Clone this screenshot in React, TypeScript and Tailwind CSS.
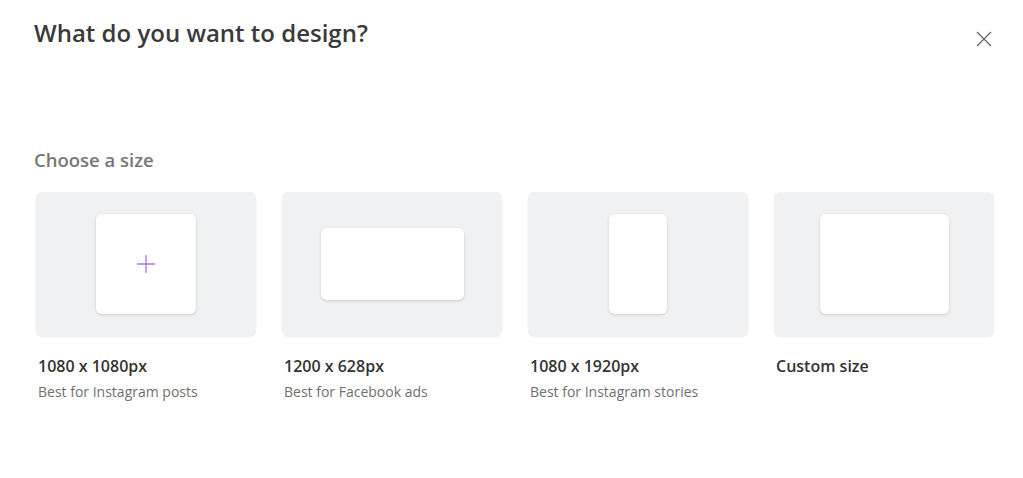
import React from "react";

type Size = {
  title: string;
  hint?: string;
  box: string;
  plus?: boolean;
};

const sizes: Size[] = [
  { title: "1080 x 1080px", hint: "Best for Instagram posts", box: "w-[100px] h-[100px]", plus: true },
  { title: "1200 x 628px", hint: "Best for Facebook ads", box: "w-[143px] h-[72px]" },
  { title: "1080 x 1920px", hint: "Best for Instagram stories", box: "w-[58px] h-[100px]" },
  { title: "Custom size", box: "w-[129px] h-[100px]" },
];

const App: React.FC = () => {
  return (
    <div className="w-[1023px] h-[478px] bg-white font-['Open_Sans',sans-serif] text-[#333]">
      <div className="flex items-start justify-between pl-[34px] pr-[30px] pt-[16px]">
        <h1 className="text-[24px] font-semibold leading-[34px] text-[#3a3a3a]">
          What do you want to design?
        </h1>
        <button className="mt-[14px] text-[#666]">
          <svg width="18" height="18" viewBox="0 0 18 18" fill="none" stroke="currentColor" strokeWidth="1.3">
            <path d="M2 2 L16 16 M16 2 L2 16" />
          </svg>
        </button>
      </div>

      <div className="pl-[34px] pt-[97px]">
        <h2 className="text-[18.5px] font-semibold leading-[26px] text-[#777]">Choose a size</h2>
        <div className="flex gap-[26px] pl-[2px] pt-[19px]">
          {sizes.map((s) => (
            <div key={s.title} className="w-[220px] flex flex-col">
              <div className="h-[144px] rounded-md bg-[#f0f1f3] shadow-[0_1px_2px_rgba(0,0,0,0.08)] flex items-center justify-center">
                <div className={`${s.box} rounded-md bg-white shadow-[0_1px_3px_rgba(0,0,0,0.15)] flex items-center justify-center`}>
                  {s.plus && (
                    <svg width="20" height="20" viewBox="0 0 20 20" fill="none" stroke="#a678d6" strokeWidth="1.3">
                      <path d="M10 1 V19 M1 10 H19" />
                    </svg>
                  )}
                </div>
              </div>
              <div className="pl-[2px] pt-[19px] text-[16px] font-semibold leading-[22px] text-[#333]">{s.title}</div>
              {s.hint && (
                <div className="pl-[2px] pt-[5px] text-[14px] leading-[20px] text-[#707070]">{s.hint}</div>
              )}
            </div>
          ))}
        </div>
      </div>
    </div>
  );
};

export default App;
